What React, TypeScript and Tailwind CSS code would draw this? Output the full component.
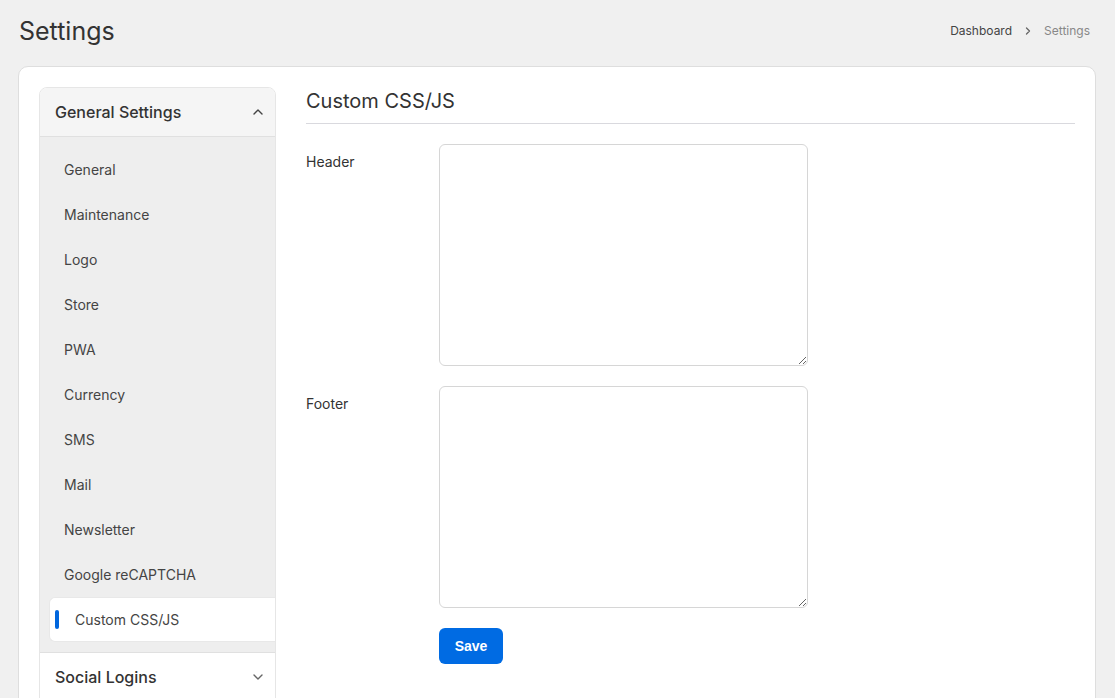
import React from "react";

const items = [
  "General",
  "Maintenance",
  "Logo",
  "Store",
  "PWA",
  "Currency",
  "SMS",
  "Mail",
  "Newsletter",
  "Google reCAPTCHA",
];

function ChevronUp() {
  return (
    <svg width="12" height="12" viewBox="0 0 12 12" fill="none" stroke="#444" strokeWidth="1.4" strokeLinecap="round" strokeLinejoin="round">
      <path d="M2 8 L6 4 L10 8" />
    </svg>
  );
}

function ChevronDown() {
  return (
    <svg width="12" height="12" viewBox="0 0 12 12" fill="none" stroke="#666" strokeWidth="1.4" strokeLinecap="round" strokeLinejoin="round">
      <path d="M2 4 L6 8 L10 4" />
    </svg>
  );
}

export default function App() {
  return (
    <div
      className="min-h-[698px] h-[698px] overflow-hidden bg-[#f0f0f0] px-[18px] pr-[19px]"
      style={{ fontFamily: "Inter, 'Noto Sans', sans-serif" }}
    >
      <div className="flex items-center justify-between pt-[15px] pl-[1px]">
        <h1 className="text-[25px] leading-[32px] text-[#333] font-normal">Settings</h1>
        <div className="flex items-center text-[12px] leading-[20px] pr-[6px]">
          <span className="text-[#444]">Dashboard</span>
          <svg className="mx-[11px]" width="10" height="10" viewBox="0 0 10 10" fill="none" stroke="#666" strokeWidth="1.3" strokeLinecap="round" strokeLinejoin="round">
            <path d="M3.5 2 L6.5 5 L3.5 8" />
          </svg>
          <span className="text-[#888]">Settings</span>
        </div>
      </div>

      <div className="mt-[19px] bg-white border border-[#dedede] rounded-[10px] p-[20px] flex gap-[30px] h-[700px]">
        <div className="w-[237px] shrink-0 flex flex-col">
          <div className="border border-[#e6e6e6] rounded-t-[8px] overflow-hidden">
            <div className="h-[49px] bg-[#f5f5f5] border-b border-[#e0e0e0] flex items-center justify-between pl-[15px] pr-[11px]">
              <span className="text-[16px] font-medium text-[#333]">General Settings</span>
              <ChevronUp />
            </div>
            <div className="bg-[#eeeeee] pt-[10px] pb-[10px] pl-[9px]">
              {items.map((it) => (
                <div key={it} className="h-[45px] flex items-center pl-[15px] text-[14px] text-[#444]">
                  {it}
                </div>
              ))}
              <div className="relative h-[45px] flex items-center pl-[25px] text-[14px] text-[#444] bg-white rounded-l-[6px] border border-r-0 border-[#e8e8e8]">
                <span className="absolute left-[5px] top-[12px] w-[4px] h-[19px] rounded-full bg-[#0066dd]" />
                Custom CSS/JS
              </div>
            </div>
            <div className="h-[49px] bg-white border-t border-[#e0e0e0] flex items-center justify-between pl-[15px] pr-[11px]">
              <span className="text-[16px] font-medium text-[#333]">Social Logins</span>
              <ChevronDown />
            </div>
          </div>
        </div>

        <div className="flex-1">
          <div className="border-b border-[#d9d9de] pb-[8px]">
            <h2 className="text-[20px] leading-[28px] text-[#333] font-normal">Custom CSS/JS</h2>
          </div>
          <div className="mt-[20px] flex flex-col gap-[20px]">
            <div className="flex">
              <label className="w-[133px] shrink-0 pt-[8px] text-[14px] leading-[20px] text-[#333]">Header</label>
              <textarea className="w-[369px] h-[222px] border border-[#d6d6d6] rounded-[6px] resize-y outline-none" />
            </div>
            <div className="flex">
              <label className="w-[133px] shrink-0 pt-[8px] text-[14px] leading-[20px] text-[#333]">Footer</label>
              <textarea className="w-[369px] h-[222px] border border-[#d6d6d6] rounded-[6px] resize-y outline-none" />
            </div>
            <div className="flex">
              <div className="w-[133px] shrink-0" />
              <button
                className="w-[64px] h-[36px] rounded-[6px] bg-[#006be3] text-white text-[14px] font-bold"
                style={{ fontFamily: "'Liberation Sans', Arial, sans-serif" }}
              >
                Save
              </button>
            </div>
          </div>
        </div>
      </div>
    </div>
  );
}
